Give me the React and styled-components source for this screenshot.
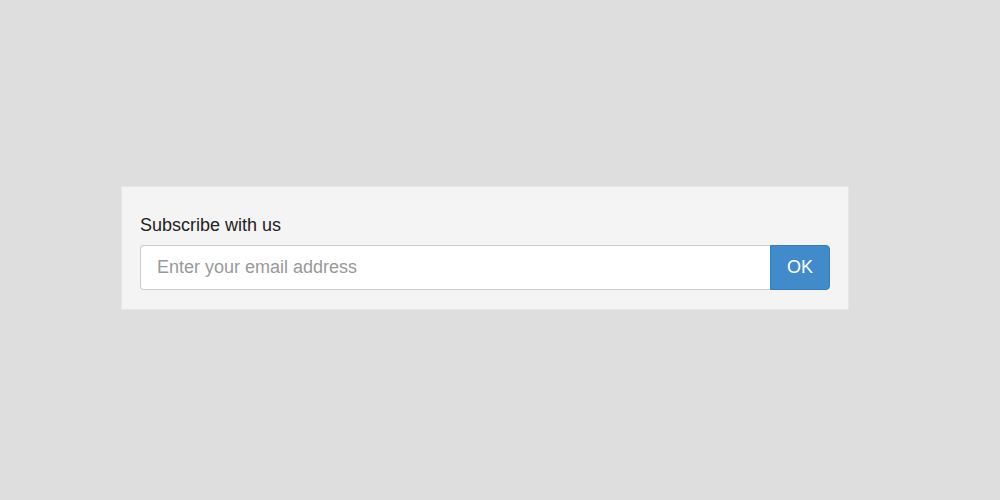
import React from "react";
import styled, { createGlobalStyle } from "styled-components";

const Global = createGlobalStyle`
  html, body { margin: 0; padding: 0; background: #dedede; }
  body { font-family: "Liberation Sans", Arial, sans-serif; }
  * { box-sizing: border-box; }
`;

const Page = styled.div`
  width: 1000px;
  height: 500px;
  display: flex;
  justify-content: flex-start;
  align-items: flex-start;
  padding: 186px 0 0 121px;
`;

const Panel = styled.form`
  width: 728px;
  background: #f4f4f4;
  border: 1px solid #e6e6e6;
  padding: 26px 18px 19px;
  display: flex;
  flex-direction: column;
`;

const Label = styled.label`
  font-size: 18px;
  line-height: 24px;
  color: #222;
  margin-bottom: 8px;
`;

const Group = styled.div`
  display: flex;
  height: 45px;
`;

const Input = styled.input`
  flex: 1;
  height: 100%;
  border: 1px solid #ccc;
  border-right: none;
  border-radius: 4px 0 0 4px;
  padding: 0 16px;
  font-family: "Liberation Sans", Arial, sans-serif;
  font-size: 18px;
  color: #555;
  background: #fff;
  outline: none;
  &::placeholder { color: #999; }
`;

const Button = styled.button`
  width: 60px;
  height: 100%;
  border: 1px solid #357ebd;
  border-radius: 0 4px 4px 0;
  background: #428bca;
  color: #fff;
  font-family: "Liberation Sans", Arial, sans-serif;
  font-size: 18px;
  padding: 0;
  cursor: pointer;
`;

export default function App() {
  return (
    <>
      <Global />
      <Page>
        <Panel onSubmit={(e) => e.preventDefault()}>
          <Label htmlFor="email">Subscribe with us</Label>
          <Group>
            <Input id="email" type="email" placeholder="Enter your email address" />
            <Button type="submit">OK</Button>
          </Group>
        </Panel>
      </Page>
    </>
  );
}
